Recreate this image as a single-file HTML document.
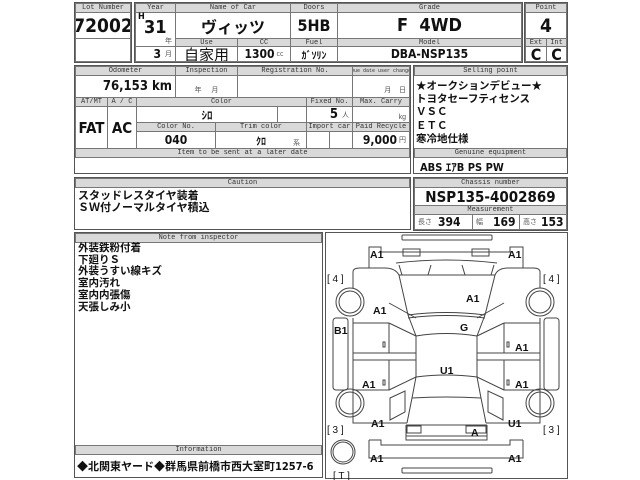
<!DOCTYPE html>
<html><head><meta charset="utf-8">
<style>
*{margin:0;padding:0;box-sizing:border-box}
body{width:640px;height:480px;background:#fff;position:relative;overflow:hidden;font-family:"Liberation Sans","Noto Sans CJK JP",sans-serif;color:#111}
div{position:absolute}
.c{border:1px solid #777;display:flex;align-items:center;justify-content:center;white-space:nowrap;overflow:hidden}
.h{background:#d9d9d9;font-family:"Liberation Mono","Noto Sans CJK JP",monospace;font-size:7px;color:#333;border:1px solid #777}
.o{border:1.5px solid #555}
.b{font-weight:bold;font-family:"DejaVu Sans Condensed","Liberation Sans Narrow","Noto Sans CJK JP",sans-serif}
.r{justify-content:flex-end;padding-right:3px}
.l{justify-content:flex-start;padding-left:3px}
.s{font-size:7px;font-weight:normal;color:#555;margin-left:2px}
.t{font-size:10.5px;font-weight:bold;line-height:11.7px;left:78px;position:absolute}
</style></head><body>

<!-- Lot -->
<div class="o" style="left:74px;top:2px;width:58px;height:61px"></div>
<div class="c h" style="left:75px;top:3px;width:56px;height:10px">Lot Number</div>
<div class="c b" style="left:75px;top:12px;width:56px;height:27px;font-size:19px">72002</div>
<div class="c" style="left:75px;top:38px;width:56px;height:24px"></div>

<!-- Year etc -->
<div class="o" style="left:134px;top:2px;width:389px;height:61px"></div>
<div class="c h" style="left:135px;top:3px;width:41px;height:10px">Year</div>
<div class="c h" style="left:175px;top:3px;width:116px;height:10px">Name of Car</div>
<div class="c h" style="left:290px;top:3px;width:48px;height:10px">Doors</div>
<div class="c h" style="left:337px;top:3px;width:185px;height:10px">Grade</div>
<div class="c" style="left:135px;top:12px;width:41px;height:35px"></div>
<div class="b" style="left:138px;top:12px;font-size:9px">H</div>
<div class="b" style="left:144px;top:17px;font-size:18px">31</div>
<div style="left:165px;top:36px;font-size:7px;color:#555">年</div>
<div class="c b" style="left:175px;top:12px;width:116px;height:27px;font-size:16px">ヴィッツ</div>
<div class="c b" style="left:290px;top:12px;width:48px;height:27px;font-size:16px">5HB</div>
<div class="c b" style="left:337px;top:12px;width:185px;height:27px;font-size:18px">F&nbsp;&nbsp;4WD</div>
<div class="c h" style="left:175px;top:38px;width:63px;height:9px">Use</div>
<div class="c h" style="left:237px;top:38px;width:54px;height:9px">CC</div>
<div class="c h" style="left:290px;top:38px;width:48px;height:9px">Fuel</div>
<div class="c h" style="left:337px;top:38px;width:185px;height:9px">Model</div>
<div class="c b r" style="left:135px;top:46px;width:41px;height:16px;font-size:12px">3<span class="s">&nbsp;月</span></div>
<div class="c" style="left:175px;top:46px;width:63px;height:16px;font-size:15px">自家用</div>
<div class="c b" style="left:237px;top:46px;width:54px;height:16px;font-size:12px">1300<span class="s">cc</span></div>
<div class="c b" style="left:290px;top:46px;width:48px;height:16px;font-size:10px">ｶﾞｿﾘﾝ</div>
<div class="c b" style="left:337px;top:46px;width:185px;height:16px;font-size:12px">DBA-NSP135</div>

<!-- Point -->
<div class="o" style="left:524px;top:2px;width:44px;height:61px"></div>
<div class="c h" style="left:525px;top:3px;width:42px;height:10px">Point</div>
<div class="c b" style="left:525px;top:12px;width:42px;height:27px;font-size:19px">4</div>
<div class="c h" style="left:525px;top:38px;width:22px;height:9px">Ext</div>
<div class="c h" style="left:546px;top:38px;width:21px;height:9px">Int</div>
<div class="c b" style="left:525px;top:46px;width:22px;height:16px;font-size:16px">C</div>
<div class="c b" style="left:546px;top:46px;width:21px;height:16px;font-size:16px">C</div>

<!-- second block -->
<div class="o" style="left:74px;top:65px;width:337px;height:109px"></div>
<div class="c h" style="left:75px;top:66px;width:101px;height:10px">Odometer</div>
<div class="c h" style="left:175px;top:66px;width:63px;height:10px">Inspection</div>
<div class="c h" style="left:237px;top:66px;width:116px;height:10px">Registration No.</div>
<div class="c h" style="left:352px;top:66px;width:58px;height:10px;font-size:5px">Due date user change</div>
<div class="c b r" style="left:75px;top:75px;width:101px;height:23px;font-size:13px">76,153 km</div>
<div class="c" style="left:175px;top:75px;width:63px;height:23px;font-size:7px;color:#555;padding-top:6px">年&nbsp;&nbsp;&nbsp;&nbsp;&nbsp;月</div>
<div class="c" style="left:237px;top:75px;width:116px;height:23px"></div>
<div class="c r" style="left:352px;top:75px;width:58px;height:23px;font-size:7px;color:#555;padding-top:6px">月&nbsp;&nbsp;&nbsp;&nbsp;日</div>
<div class="c h" style="left:75px;top:97px;width:33px;height:10px">AT/MT</div>
<div class="c h" style="left:107px;top:97px;width:30px;height:10px">A / C</div>
<div class="c h" style="left:136px;top:97px;width:171px;height:10px">Color</div>
<div class="c h" style="left:306px;top:97px;width:47px;height:10px">Fixed No.</div>
<div class="c h" style="left:352px;top:97px;width:58px;height:10px">Max. Carry</div>
<div class="c b" style="left:75px;top:106px;width:33px;height:43px;font-size:15px">FAT</div>
<div class="c b" style="left:107px;top:106px;width:30px;height:43px;font-size:15px">AC</div>
<div class="c b" style="left:136px;top:106px;width:142px;height:17px;font-size:11px">ｼﾛ</div>
<div class="c" style="left:277px;top:106px;width:30px;height:17px"></div>
<div class="c b r" style="left:306px;top:106px;width:47px;height:17px;font-size:13px">5<span class="s">&nbsp;人</span></div>
<div class="c r" style="left:352px;top:106px;width:58px;height:17px;font-size:7px;color:#555;padding-top:6px">kg</div>
<div class="c h" style="left:136px;top:122px;width:80px;height:10px">Color No.</div>
<div class="c h" style="left:215px;top:122px;width:92px;height:10px">Trim color</div>
<div class="c h" style="left:306px;top:122px;width:47px;height:10px">Import car</div>
<div class="c h" style="left:352px;top:122px;width:58px;height:10px">Paid Recycle</div>
<div class="c b" style="left:136px;top:131px;width:80px;height:18px;font-size:12px">040</div>
<div class="c b" style="left:215px;top:131px;width:92px;height:18px;font-size:10px">ｸﾛ</div>
<div style="left:293px;top:138px;font-size:7px;color:#555">系</div>
<div class="c" style="left:306px;top:131px;width:24px;height:18px"></div>
<div class="c" style="left:329px;top:131px;width:24px;height:18px"></div>
<div class="c b r" style="left:352px;top:131px;width:58px;height:18px;font-size:12px">9,000<span class="s">円</span></div>
<div class="c h" style="left:75px;top:148px;width:335px;height:10px">Item to be sent at a later date</div>

<!-- selling point -->
<div class="o" style="left:413px;top:65px;width:155px;height:109px"></div>
<div class="c h" style="left:414px;top:66px;width:153px;height:10px">Selling point</div>
<div style="left:416px;top:80px;font-size:10.5px;font-weight:bold;line-height:13.2px">★オークションデビュー★<br>トヨタセーフティセンス<br>ＶＳＣ<br>ＥＴＣ<br>寒冷地仕様</div>
<div class="c h" style="left:414px;top:148px;width:153px;height:10px">Genuine equipment</div>
<div class="b" style="left:420px;top:159px;font-size:11px">ABS ｴｱB PS PW</div>

<!-- caution -->
<div class="o" style="left:74px;top:177px;width:337px;height:53px"></div>
<div class="c h" style="left:75px;top:178px;width:335px;height:10px">Caution</div>
<div style="left:78px;top:190px;font-size:11px;font-weight:bold;line-height:12px">スタッドレスタイヤ装着<br>ＳＷ付ノーマルタイヤ積込</div>

<!-- chassis -->
<div class="o" style="left:413px;top:177px;width:155px;height:54px"></div>
<div class="c h" style="left:414px;top:178px;width:153px;height:10px">Chassis number</div>
<div class="c b" style="left:414px;top:187px;width:153px;height:19px;font-size:15px">NSP135-4002869</div>
<div class="c h" style="left:414px;top:205px;width:153px;height:10px">Measurement</div>
<div class="c b l" style="left:414px;top:214px;width:59px;height:16px;font-size:12px"><span class="s" style="margin:0 6px 0 0">長さ</span>394</div>
<div class="c b l" style="left:472px;top:214px;width:48px;height:16px;font-size:12px"><span class="s" style="margin:0 10px 0 0">幅</span>169</div>
<div class="c b l" style="left:519px;top:214px;width:48px;height:16px;font-size:12px"><span class="s" style="margin:0 4px 0 0">高さ</span>153</div>

<!-- note -->
<div class="o" style="left:74px;top:232px;width:249px;height:246px"></div>
<div class="c h" style="left:75px;top:233px;width:247px;height:10px">Note from inspector</div>
<div class="t" style="top:243px">外装鉄粉付着<br>下廻りＳ<br>外装うすい線キズ<br>室内汚れ<br>室内内張傷<br>天張しみ小</div>
<div class="c h" style="left:75px;top:445px;width:247px;height:10px">Information</div>
<div style="left:77px;top:458px;font-size:11px;font-weight:bold;white-space:nowrap">◆北関東ヤード◆群馬県前橋市西大室町<span class="b" style="position:static">1257-6</span></div>

<!-- diagram -->
<div class="o" style="left:325px;top:232px;width:243px;height:247px"></div>
<svg style="position:absolute;left:0;top:0" width="640" height="480" fill="none" stroke="#444" stroke-width="1">
<rect x="402" y="235" width="90" height="5" rx="1"/>
<rect x="402" y="468" width="90" height="5" rx="1"/>
<path d="M369,268 V247 H381 V252 H510 V247 H523 V268"/>
<rect x="403" y="249" width="17" height="7"/><rect x="472" y="249" width="17" height="7"/>
<path d="M396,263 Q446,257 497,263 M399,265 L402,275 H428 L431,265 M462,265 L465,275 H491 L494,265"/>
<path d="M353,272 V288 M540,272 V288 M353,272 Q353,268 360,268 H385 Q395,268 399,275 L408,315 M540,272 Q540,268 533,268 H508 Q498,268 495,275 L485,315"/>
<path d="M399,275 H495 M408,315 Q446,310 485,315 M408,318 Q446,313 485,318"/>
<path d="M416,336 Q446,331 477,336 M408,315 L416,336 V377 L412,398 L407,423 M485,315 L477,336 V377 L481,398 L486,423"/>
<path d="M416,377 Q446,373 477,377 M412,398 Q446,396 481,398"/>
<path d="M353,318 V423 H407 M540,318 V423 H486"/>
<rect x="333" y="318" width="15" height="72" rx="3"/><rect x="544" y="318" width="15" height="72" rx="3"/>
<path d="M353,323 H389 V353 M353,353 H416 M353,360 H416 M353,390 H389 V360 M389,323 L416,336 M389,390 L416,377"/>
<path d="M540,323 H504 V353 M540,353 H477 M540,360 H477 M540,390 H504 V360 M504,323 L477,336 M504,390 L477,377"/>
<path d="M389,303 L416,318 M504,303 L477,318"/>
<rect x="383" y="342" width="2" height="5"/><rect x="383" y="380" width="2" height="5"/><rect x="507" y="342" width="2" height="5"/><rect x="507" y="380" width="2" height="5"/>
<path d="M390,398 L405,391 V412 L390,420 Z M503,398 L488,391 V412 L503,420 Z"/>
<path d="M406,425 H487 M406,436 H487 M406,425 V440 H487 V425"/>
<rect x="407" y="426" width="14" height="7"/><rect x="466" y="426" width="20" height="7"/>
<path d="M369,440 V458 H523 V440 M369,440 H381 V445 H510 V440 H523"/>
<circle cx="350" cy="302" r="14"/><circle cx="350" cy="302" r="11"/>
<circle cx="540" cy="302" r="14"/><circle cx="540" cy="302" r="11"/>
<circle cx="350" cy="403" r="14"/><circle cx="350" cy="403" r="11"/>
<circle cx="540" cy="403" r="14"/><circle cx="540" cy="403" r="11"/>
<circle cx="343" cy="452" r="12"/><circle cx="343" cy="452" r="10"/>
</svg>
<svg style="position:absolute;left:0;top:0" width="640" height="480" font-family="Liberation Sans, sans-serif" font-weight="bold" font-size="10.5" fill="#111">
<text x="370" y="258">A1</text><text x="508" y="258">A1</text>
<text x="466" y="302">A1</text><text x="373" y="314">A1</text>
<text x="334" y="334">B1</text><text x="460" y="331">G</text>
<text x="515" y="351">A1</text><text x="440" y="374">U1</text>
<text x="362" y="388">A1</text><text x="515" y="388">A1</text>
<text x="371" y="427">A1</text><text x="508" y="427">U1</text>
<text x="471" y="436">A</text>
<text x="370" y="462">A1</text><text x="508" y="462">A1</text>
<g font-weight="normal" font-size="10"><text x="327" y="282">[ 4 ]</text><text x="543" y="282">[ 4 ]</text>
<text x="327" y="433">[ 3 ]</text><text x="543" y="433">[ 3 ]</text><text x="333" y="479">[ T ]</text></g>
</svg>
</body></html>
